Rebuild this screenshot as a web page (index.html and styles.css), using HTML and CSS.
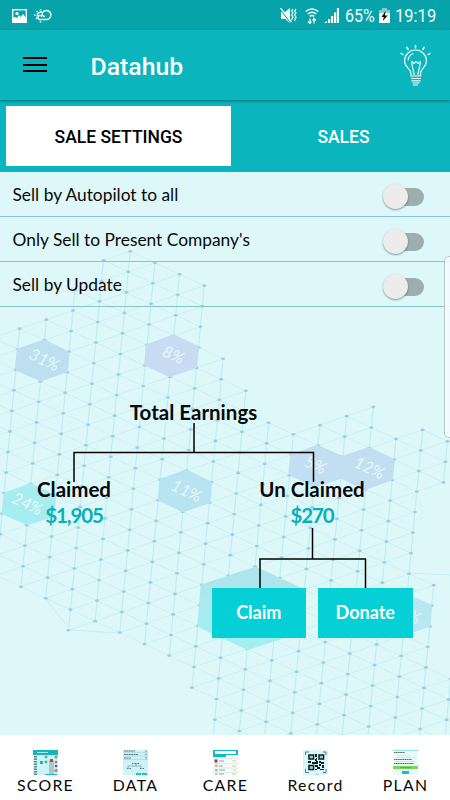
FILE: index.html
```html
<!DOCTYPE html>
<html lang="en">
<head>
<meta charset="utf-8">
<title>Datahub</title>
<link rel="stylesheet" href="styles.css">
</head>
<body>
<div class="app">
  <div class="status">
    <div class="status-group">
      <svg width="15" height="14" viewBox="0 0 15 14"><rect x=".7" y=".7" width="13.6" height="12.6" fill="none" stroke="#fff" stroke-width="1.4"/><circle cx="5" cy="4.5" r="1.6" fill="#fff"/><path d="M1 13V9l2-1 2 1 2-3 1.500 2L11 5l3 4v4z" fill="#fff"/></svg>
      <svg class="weather" width="19" height="15" viewBox="0 0 19 15" fill="none" stroke="#e8fafa" stroke-width="1.400"><path d="M4.500 9a3.800 3.800 0 0 1 5.500-4.500M9.500 11.500H7a2 2 0 0 1 0-4c1 0 1.600.4 2 1M9 11.500h4a4.500 4.500 0 1 0-3.700-6.500c-.6 2 .6 3.500 2.700 3.500"/><path d="M7.500 1v1.500M3.500 3l1 1M1 7h1.500M3 11l1-1M7.500 14.500v-1.500" stroke-width="1.500"/></svg>
    </div>
    <div class="status-group">
      <svg width="17" height="15" viewBox="0 0 17 15"><path d="M1 4h4l5-4v15l-5-4H1z" fill="#fff"/><path d="M0 1l11 14" stroke="#07a3ab" stroke-width="1.200"/><path d="M.5 0l11 14" stroke="#fff" stroke-width="1.300"/><path d="M13 1l-1.500 2 1.500 2-1.500 2L13 9l-1.500 3M16 1l-1.500 2L16 5l-1.500 2L16 9l-1.500 4" stroke="#fff" stroke-width="1.200" fill="none"/></svg>
      <svg class="wifi" width="14" height="16" viewBox="0 0 14 16" fill="none" stroke="#fff" stroke-width="1.400"><path d="M.7 3.500q6.300-5 12.600 0M2.700 6q4.300-3.600 8.600 0M4.700 8.400q2.300-2 4.600 0"/><path d="M5 15.500v-5M3 13.500l2 2 1.500-2M9 10.500v5M7.500 12.500l1.500-2 2 2" stroke-width="1.200"/></svg>
      <svg class="signal" width="15" height="15" viewBox="0 0 15 15" fill="#fff"><path d="M0 15l3-2v2zM4 11h2.200v4H4zM7 8h2.200v7H7zM10 4.500h2.200V15H10zM12.900 0H15v15h-2.100z"/></svg>
      <span class="pct">65%</span>
      <svg class="battery" width="11" height="15" viewBox="0 0 11 15"><path d="M3 0h5v2h3v4H0V2h3z" fill="#83cdd0"/><path d="M0 5h11v10H0z" fill="#fff"/><path d="M6.500 3L2.500 9h2.300L3.800 13 8.800 7.500H6z" fill="#111"/></svg>
      <span class="clock">19:19</span>
    </div>
  </div>
  <header class="bar">
    <div class="menu"><i></i><i></i><i></i></div>
    <h1>Datahub</h1>
    <svg class="bulb" width="31" height="42" viewBox="0 0 31 42" fill="none" stroke="#effbfb" stroke-width="1.200"><path d="M11 32v-2.500c0-5-6.500-6-6.500-12.500a11 11 0 0 1 22 0C26.500 23.500 20.500 24.500 20.500 29.500v2.500z"/><path d="M8 16.500Q9 10.500 13.500 9.500M14.300 31l-2.800-12.500M17.700 31l2.800-12.500M11.500 18.500q.5-2 1.500 0t2 0q1-2 2 0t2 0q1-2 1.500 0"/><path d="M15.500 1v3.500M6.500 3l2 3M24.500 3l-2 3M.5 9l3 2M30.500 9l-3 2" stroke-width="1.500"/><path d="M11 34.500h10M11.500 36.800h9M12.500 39h7M13 41h5"/></svg>
  </header>
  <div class="tabs"><div class="tab active">SALE SETTINGS</div><div class="tab">SALES</div></div>
  <main class="content">
    <svg class="mesh" id="mesh" width="450" height="563" viewBox="0 172 450 563">
      <g class="cells">
        <path fill="#bddff0" d="M44.300 339.300L69.300 352 68 371.700 40.700 381.300 15 370 16.700 348.700z"/>
        <path fill="#c8dcf1" d="M173.300 334.300L199 346.300 196.700 368 169 377 144.300 365.300 145.700 344.700z"/>
        <path fill="#a6edef" d="M30.700 483.300L56 495 54.700 516.700 27.300 525 1.700 514 3.700 492.700z"/>
        <path fill="#b7e4f0" d="M186.300 469.300L212 482 210.700 502.700 183 512.300 157.700 500 159.700 479z"/>
        <path fill="#c3def0" d="M317 444.700L342.300 455.700 369 447 395 459.300 392.700 480 365 490 341 478.700 315 487.500 288.300 474.300 290.300 454.700z"/>
        <path fill="url(#cyan)" d="M200.700 584.700L255.700 566.700 306 590 303 632 247.700 650 197.300 626.700z"/>
        <path fill="#b8e6f1" d="M407 594L431.700 604.700 430 626.700 402 636 378 625 380 603z"/>
      </g>
      <defs><linearGradient id="cyan" x1="0" y1="0" x2="0" y2="1"><stop offset="0" stop-color="#aee4ed"/><stop offset="1" stop-color="#a3f0ee"/></linearGradient></defs>
      <g class="cell-labels">
        <text transform="translate(42 365) rotate(25)">31%</text>
        <text transform="translate(171 360) rotate(25)">8%</text>
        <text transform="translate(25 509) rotate(25)">24%</text>
        <text transform="translate(184 496) rotate(25)">11%</text>
        <text transform="translate(313 470) rotate(25)">5%</text>
        <text transform="translate(367 473) rotate(25)">12%</text>
        <text transform="translate(403 618) rotate(25)">15%</text>
      </g>
    </svg>
    <ul class="settings">
      <li><span>Sell by Autopilot to all</span><b class="switch"></b></li>
      <li><span>Only Sell to Present Company's</span><b class="switch"></b></li>
      <li><span>Sell by Update</span><b class="switch"></b></li>
    </ul>
    <section class="tree">
      <div class="total">Total Earnings</div>
      <svg class="join top" width="242" height="59" viewBox="0 0 242 59"><path d="M121 0v29.500M1 59V29.500h239.500V59"/></svg>
      <div class="nodes">
        <div class="node"><div>Claimed</div><div class="money">$1,905</div></div>
        <div class="node"><div>Un Claimed</div><div class="money">$270</div></div>
      </div>
      <svg class="join low" width="108" height="60" viewBox="0 0 108 60"><path d="M53.500 0v31M1 60V31h105.500V60"/></svg>
      <div class="actions"><button>Claim</button><button>Donate</button></div>
    </section>
  </main>
  <nav class="nav">
    <div class="item"><svg width="25" height="25" viewBox="0 0 25 25"><path fill="#cdf3f5" d="M0 0h25v25H0z"/><path fill="#12b7bd" d="M0 0h25v5H0z"/><path stroke="#a8e5e8" d="M4 2.500h11"/><path stroke="#5f8b90" stroke-width="3" stroke-dasharray="1.500 1" d="M2.500 6v19"/><path fill="#a8c9d2" d="M16 10h5v14h-5z"/><path fill="#ad514c" d="M17 9h3v3h-3z"/><path fill="#0bbcc2" d="M7 11h3v3H7zM12 24h12v1H12z"/><g fill="none" stroke="#458b83"><circle cx="13" cy="7" r="1"/><circle cx="13" cy="12" r="1"/><circle cx="23" cy="7" r="1"/></g><g fill="#df625f"><circle cx="23" cy="12" r="1.300"/><circle cx="23" cy="20.500" r="1.500"/></g><circle cx="23" cy="16" r="1.300" fill="#396974"/></svg><span>SCORE</span></div>
    <div class="item"><svg width="25" height="25" viewBox="0 0 25 25"><path fill="#cdf3f7" d="M0 0h25v25H0z"/><g stroke="#5a7579" fill="none"><path stroke-dasharray="2 .4" d="M1 1h11M1 4.500h14M1 8h7"/><path stroke-width=".5" d="M5 18v-2h13v2M13 16v-2"/><path stroke-dasharray="1 .5" d="M9 13.500h7M4 18.500h4M17 18.500h4"/></g><path stroke="#94cbd1" stroke-width=".5" d="M0 2.500h25M0 6h25M0 9.500h25"/><g fill="#71bfc4"><circle cx="23" cy="1" r="1"/><circle cx="23" cy="4.500" r="1"/><circle cx="23" cy="8" r="1"/></g><path fill="#09cad1" d="M13 23h5v2h-5zM19 23h5v2h-5z"/></svg><span>DATA</span></div>
    <div class="item"><svg width="25" height="25" viewBox="0 0 25 25"><path fill="#f6fcfc" d="M0 0h25v25H0z"/><path fill="#12b9bf" d="M0 0h25v7H0z"/><path fill="#fff" d="M2 1h21v3H2zM13 5h12v2H13z"/><path stroke="#d5eeee" d="M0 8.500h25M0 13.500h25M0 18h25M0 22.500h25"/><path fill="#8c4742" d="M1.500 9.500h3v3h-3z"/><path fill="#dba69f" d="M2 14.500h2.500v2.500H2zM2 19h2.500v2.500H2zM2 23.500h2.500V25H2z"/><path stroke="#909fa0" d="M6 11h5M6 16h4M6 20h6M6 24h5"/><path stroke="#edc66b" d="M19 11h4M19 16h4M20 20h3M19 24h4"/></svg><span>CARE</span></div>
    <div class="item"><svg width="25" height="25" viewBox="0 0 25 25"><path fill="#d8f7f9" d="M0 0h25v25H0z"/><path fill="none" stroke="#435b5e" stroke-width=".8" d="M2.500 5V2H6M20 2h3v3M2.500 19v3.500H6M20 22.500h3V19"/><g fill="none" stroke="#0c2024" stroke-width="1.600"><path d="M6 5h4.500v4H6zM16 5h4.500v4H16zM6 15.500h4.500v4H6z"/></g><path fill="#0c2024" d="M7.500 6.500h1v1h-1zM17.500 6.500h1v1h-1zM7.500 16.500h1v1h-1zM12 4h2v3h-2zM13 8h1v3h-2V9h1zM5 11h3v2H5zM9 12h4v-1h2v3H9zM16 11h2v1h3v2h-3v-1h-2zM12 15h3v2h-3zM16 14h2v2h-2zM19 15h2v3h-2zM14 17h3v2h-3zM12 19h2v1h-2zM17 19h4v1h-4z"/><path stroke="#31cdd4" d="M12 25h4"/></svg><span>Record</span></div>
    <div class="item"><svg width="25" height="25" viewBox="0 0 25 25"><path fill="#edfafa" d="M0 0h25v25H0z"/><path stroke="#0cbdc4" stroke-width=".8" d="M0 0h25"/><path stroke="#596f71" stroke-dasharray="1.500 .3" d="M1 2.500h11M1 9.500h18M1 13.500h20"/><path stroke="#b2dadd" stroke-width=".5" d="M3 5.500h14M3 7.500h20M3 11.500h20"/><path fill="#76d957" d="M0 16h25v3H0z"/><path stroke="#4e9f45" stroke-width=".7" d="M7 17.500h11"/><path fill="#10c4ca" d="M9 21h7v3H9z"/></svg><span>PLAN</span></div>
  </nav>
  <div class="edge-handle"></div>
</div>
<script src="mesh.js"></script>
</body>
</html>
```
FILE: styles.css
```css
* { box-sizing: border-box; }
body { margin: 0; }
.app { position: relative; width: 450px; height: 800px; display: flex; flex-direction: column; overflow: hidden; background: #def8fa; font-family: Lato, sans-serif; color: #080808; }
svg { display: block; flex: none; }
.status { height: 30px; padding: 1px 14px 0 12px; background: #07a3ab; display: flex; justify-content: space-between; align-items: center; color: #f2fbfb; font: 18px Roboto, sans-serif; }
.status-group { display: flex; align-items: center; }
.weather { margin-left: 6px; }
.wifi { margin-left: 8px; }
.signal { margin-left: 5px; }
.pct { margin-left: 6px; width: 31px; }
.pct, .clock { display: block; white-space: nowrap; transform-origin: left center; }
.pct { transform: scaleX(.89); }
.battery { margin-left: 3px; }
.clock { margin-left: 5px; width: 41px; transform: scaleX(.92); }
.bar { position: relative; z-index: 1; height: 70px; background: #0ab5bd; box-shadow: 0 1px 3px rgba(0, 50, 55, .55); display: flex; align-items: center; padding: 0 20px 0 23px; }
.menu { display: flex; flex-direction: column; gap: 4.500px; width: 24px; margin-top: -1px; }
.menu i { height: 2px; background: #000; }
.bar h1 { margin: 3px auto 0 43.500px; font: 500 24.800px/30px Roboto, sans-serif; color: #fff; }
.bulb { margin-right: -1px; }
.tabs { height: 72px; background: #0ab5bd; padding: 6px 0 6px 6px; display: flex; }
.tab { flex: none; width: 225px; display: flex; align-items: center; justify-content: center; font: 500 17.500px Roboto, sans-serif; color: #fff; padding-top: 1px; }
.tab.active { background: #fff; color: #000; }
.content { position: relative; height: 563px; }
.mesh { position: absolute; top: 0; left: 0; }
.mesh line { stroke: #c9f2f5; stroke-width: 1; }
.mesh .column { stroke: #b9f0f3; stroke-width: 1.200; }
.mesh .outline { fill: none; stroke: #c4f0f4; stroke-width: 1; }
.mesh ellipse { fill: #abc8e1; }
.cell-labels { font: italic 16.500px Lato, sans-serif; fill: #e5f7fb; text-anchor: middle; }
.settings { position: relative; list-style: none; margin: 0; padding: 0; }
.settings li { height: 45px; border-bottom: 1px solid #88c5cb; padding: 0 26px 0 12.500px; display: flex; align-items: center; justify-content: space-between; font-size: 17.350px; }
.settings li span { margin-top: 1px; }
.switch { width: 40px; height: 26px; margin-top: 5px; position: relative; display: flex; align-items: center; }
.switch::before { content: ""; width: 25px; height: 25px; border-radius: 50%; margin-left: -1px; background: #ececec; box-shadow: 0 1px 2px rgba(0, 40, 40, .45); z-index: 1; }
.switch::after { content: ""; width: 32px; height: 18px; border-radius: 9px; margin-left: -16px; background: #9caeae; }
.tree { position: relative; padding-top: 92px; font-weight: 700; font-size: 20.500px; line-height: 26px; }
.total { width: 387px; text-align: center; height: 24px; }
.join { fill: none; stroke: #000; stroke-width: 1.500; }
.join.top { margin-left: 72.500px; }
.nodes { display: flex; height: 46px; padding-left: 14px; margin-top: -6px; }
.node { width: 120px; text-align: center; height: 52px; }
.node + .node { margin-left: 118px; }
.money { color: #0aafb6; letter-spacing: -1.100px; }
.join.low { margin: 6px 0 0 259px; }
.actions { display: flex; gap: 12px; padding-left: 211.500px; }
.actions button { width: 94.500px; height: 49.500px; border: 0; padding: 0 0 2px; background: #05d0d6; color: #fff; font: 700 18px Lato, sans-serif; }
.nav { position: relative; flex: 1; background: #fff; display: flex; padding-top: 15px; }
.item { width: 90px; display: flex; flex-direction: column; align-items: center; }
.item span { font-size: 15.800px; line-height: 20px; letter-spacing: 1.300px; padding-left: 1px; }
.edge-handle { position: absolute; left: 444px; top: 256px; width: 12px; height: 182px; border: 1px solid #b8c9cd; border-radius: 5px; background: rgba(246, 251, 253, .85); }
```
FILE: mesh.js
```js
const svg = document.getElementById("mesh");
const ns = "http://www.w3.org/2000/svg";

// Outline of the triangulated map area.
const area = [[130,251],[154,262],[179,274],[204,285],[202,306],[200,326],[199,346],[223,358],[246,391],[268,423],[293,434],[320,425],[346,415],[373,406],[371,427],[396,438],[423,429],[448,441],[445,461],[443,483],[416,491],[415,512],[413,532],[411,553],[409,573],[433,585],[432,605],[430,626],[428,647],[426,667],[450,679],[480,692],[480,790],[214,745],[216,720],[218,699],[193,688],[194,667],[169,656],[144,644],[120,633],[95,631],[70,630],[46,599],[21,587],[-6,575],[-40,560],[-40,350],[19,329],[46,319],[73,310],[75,289],[102,281],[103,260]];

function inside(x, y) {
  let hit = false;
  for (let i = 0, j = area.length - 1; i < area.length; j = i++) {
    const [ax, ay] = area[i], [bx, by] = area[j];
    if ((ay > y) !== (by > y) && x < (bx - ax) * (y - ay) / (by - ay) + ax) hit = !hit;
    const t = Math.max(0, Math.min(1, ((x - ax) * (bx - ax) + (y - ay) * (by - ay)) / ((bx - ax) ** 2 + (by - ay) ** 2)));
    if (Math.hypot(x - ax - t * (bx - ax), y - ay - t * (by - ay)) < 4) return true;
  }
  return hit;
}
const point = (i, j) => [97.7 + 24.7 * i - 1.95 * j, 322 + 11.46 * i + 20.55 * j];
function add(tag, attrs, parent) {
  const el = document.createElementNS(ns, tag);
  for (const k in attrs) el.setAttribute(k, attrs[k]);
  parent.appendChild(el);
}
const lines = document.createElementNS(ns, "g");
const dots = document.createElementNS(ns, "g");
for (let i = -7; i < 18; i++) {
  for (let j = -14; j < 30; j++) {
    const [x, y] = point(i, j);
    if (!inside(x, y)) continue;
    for (const [di, dj] of [[1, 0], [0, 1], [1, -1]]) {
      const [u, v] = point(i + di, j + dj);
      if (inside(u, v)) add("line", { x1: x, y1: y, x2: u, y2: v, class: di ? "diagonal" : "column" }, lines);
    }
    add("ellipse", { cx: x, cy: y, rx: 2, ry: 1.35 }, dots);
  }
}
add("path", { class: "outline", d: "M46 599L70 630L120 633M409 573L450 575" }, lines);
svg.prepend(lines);
svg.insertBefore(dots, lines.nextSibling);
```
